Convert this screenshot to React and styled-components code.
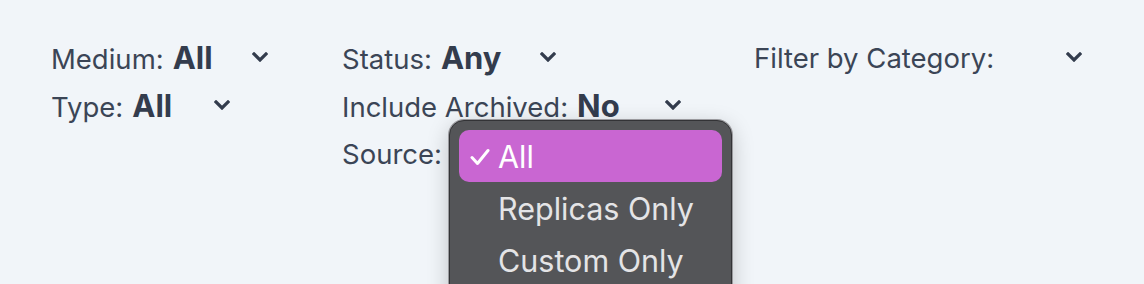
import styled, { createGlobalStyle } from "styled-components";

const GlobalStyle = createGlobalStyle`
  html, body {
    margin: 0;
    padding: 0;
    background: #f1f5f9;
  }
  body {
    font-family: Inter, "Noto Sans", sans-serif;
  }
`;

export default function App() {
  return (
    <>
      <GlobalStyle />
      <FilterBar>
        <Column>
          <Filter label="Medium:" value="All" gap={39} />
          <Filter label="Type:" value="All" gap={42} />
        </Column>
        <Column>
          <Filter label="Status:" value="Any" gap={38} />
          <Filter label="Include Archived:" value="No" gap={45} />
          <Row>
            <Label>Source:</Label>
            <Popup>
              <Option selected>
                <Check viewBox="0 0 20 18">
                  <path d="M2 9.5 L7.5 15.5 L18 2.5" />
                </Check>
                All
              </Option>
              <Option>Replicas Only</Option>
              <Option>Custom Only</Option>
            </Popup>
          </Row>
        </Column>
        <Column>
          <Filter label="Filter by Category:" gap={72} />
        </Column>
      </FilterBar>
    </>
  );
}

function Filter({ label, value, gap }) {
  return (
    <Row>
      <Label>{label}</Label>
      {value && <Value>{value}</Value>}
      <Chevron $gap={gap} viewBox="0 0 16 10">
        <path d="M2 2 L8 8 L14 2" />
      </Chevron>
    </Row>
  );
}

const FilterBar = styled.div`
  display: grid;
  grid-template-columns: 291px 412px 1fr;
  padding: 34px 0 0 51px;
  height: 250px;
  overflow: hidden;
`;

const Column = styled.div`
  display: flex;
  flex-direction: column;
`;

const Row = styled.div`
  position: relative;
  display: flex;
  align-items: baseline;
  height: 48px;
  line-height: 48px;
  white-space: nowrap;
`;

const Label = styled.span`
  font-size: 27.5px;
  font-weight: 400;
  color: #3b4556;
`;

const Value = styled.span`
  margin-left: 9px;
  font-size: 31px;
  font-weight: 700;
  color: #333c4d;
`;

const Chevron = styled.svg`
  align-self: center;
  width: 16px;
  height: 10px;
  margin-left: ${({ $gap }) => $gap}px;
  margin-top: -2px;
  fill: none;
  stroke: #333c4d;
  stroke-width: 3.2;
  stroke-linecap: square;
`;

const Popup = styled.div`
  position: absolute;
  left: 107px;
  top: -10px;
  width: 263px;
  height: 180px;
  padding: 9px;
  background: #545558;
  border: 1.5px solid #333336;
  border-radius: 15px;
  box-shadow: 0 0 0 1px #9a9a9e, 0 6px 22px rgba(0, 0, 0, 0.22);
  display: flex;
  flex-direction: column;
`;

const Option = styled.div`
  position: relative;
  display: flex;
  align-items: center;
  height: 52px;
  padding-left: 39px;
  border-radius: 10px;
  font-size: 30.5px;
  line-height: 52px;
  padding-top: 2px;
  box-sizing: border-box;
  color: ${({ selected }) => (selected ? "#ffffff" : "#e4e4e6")};
  background: ${({ selected }) => (selected ? "#c966d2" : "transparent")};
`;

const Check = styled.svg`
  position: absolute;
  left: 11px;
  top: 18px;
  width: 20px;
  height: 18px;
  fill: none;
  stroke: #ffffff;
  stroke-width: 3;
  stroke-linecap: round;
  stroke-linejoin: round;
`;
